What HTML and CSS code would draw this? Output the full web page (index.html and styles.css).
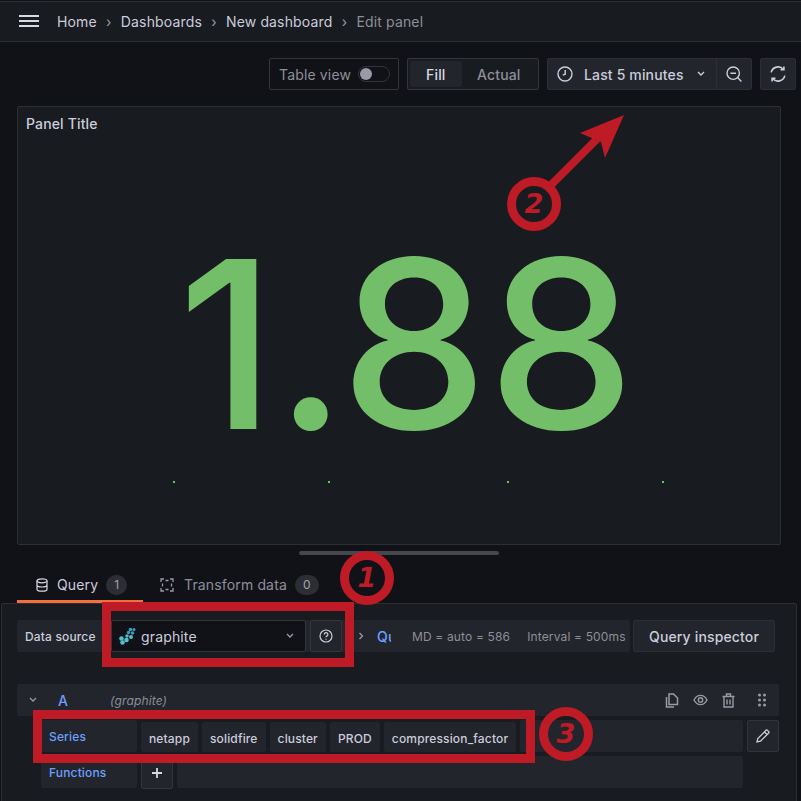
FILE: index.html
```html
<!DOCTYPE html>
<html lang="en">
<head>
    <meta charset="UTF-8">
    <title>Edit panel</title>
    <link rel="stylesheet" href="styles.css">
</head>
<body>

<header class="topbar">
    <svg class="burger" width="20" height="12" viewBox="0 0 20 12"><path d="M0 1h20M0 6h20M0 11h20" stroke="#d8d8e4" stroke-width="2"/></svg>
    <nav class="crumbs">
        <span>Home</span><i class="sep">›</i>
        <span>Dashboards</span><i class="sep">›</i>
        <span>New dashboard</span><i class="sep">›</i>
        <span class="current">Edit panel</span>
    </nav>
</header>

<div class="toolbar">
    <div class="table-toggle">
        <span>Table view</span>
        <span class="switch"><span class="knob"></span></span>
    </div>
    <div class="radio">
        <span class="radio-item active">Fill</span>
        <span class="radio-item">Actual</span>
    </div>
    <div class="time-group">
        <div class="time-picker">
            <svg width="16" height="16" viewBox="0 0 16 16" fill="none" stroke="#ccccdc" stroke-width="1.4"><circle cx="8" cy="8" r="7"/><path d="M8.2 4v4.2L5.8 9.2"/></svg>
            <span class="time-label">Last 5 minutes</span>
            <svg width="10" height="6" viewBox="0 0 10 6" fill="none" stroke="#ccccdc" stroke-width="1.4"><path d="M2 1l3 3 3-3"/></svg>
        </div>
        <div class="zoom-btn">
            <svg width="16" height="16" viewBox="0 0 16 16" fill="none" stroke="#ccccdc" stroke-width="1.4"><circle cx="7.2" cy="7.2" r="6.2"/><path d="M4.4 7.2h5.6M11.8 11.8L15.4 15.4"/></svg>
        </div>
    </div>
    <div class="refresh-btn">
        <svg width="16" height="16" viewBox="0 0 16 16" fill="none" stroke="#ccccdc" stroke-width="1.6"><path d="M1.2 6.4A7 7 0 0 1 13.4 3.4M14.8 9.6A7 7 0 0 1 2.6 12.6"/><path d="M13.9 0.4v3.4h-3.4M2.1 15.6v-3.4h3.4"/></svg>
    </div>
</div>

<section class="panel">
    <div class="panel-title">Panel Title</div>
    <div class="big-value">1.88</div>
    <span class="spark s1"></span>
    <span class="spark s2"></span>
    <span class="spark s3"></span>
    <span class="spark s4"></span>
</section>

<div class="splitter"><span class="handle"></span></div>

<div class="tabs">
    <div class="tab active">
        <svg width="14" height="14" viewBox="0 0 14 14" fill="none" stroke="#d8d8e4" stroke-width="1.2"><ellipse cx="7" cy="2.8" rx="5" ry="2"/><path d="M2 2.8v8.4c0 1.1 2.2 2 5 2s5-.9 5-2V2.8M2 7c0 1.1 2.2 2 5 2s5-.9 5-2"/></svg>
        <span>Query</span>
        <span class="count">1</span>
    </div>
    <div class="tab">
        <svg width="14" height="14" viewBox="0 0 14 14" fill="none" stroke="#9a9aa6" stroke-width="1.3"><path d="M1 4V1h3M10 1h3v3M13 10v3h-3M4 13H1v-3M5.500 2.500h3M11.500 5.500v3M5.500 11.500h3M2.500 5.500v3"/></svg>
        <span>Transform data</span>
        <span class="count">0</span>
    </div>
</div>

<section class="query-pane">
    <div class="ds-row">
        <div class="ds-bar">
            <span class="ds-label">Data source</span>
            <div class="ds-select">
                <svg width="18" height="18" viewBox="0 0 18 18" fill="#4fc0cc"><circle cx="12.500" cy="2.500" r="1.800" fill="#3a9bc4"/><circle cx="16" cy="2.500" r="1.500" fill="#3a9bc4"/><circle cx="10.500" cy="5.500" r="1.700" fill="#3a9bc4"/><circle cx="14.500" cy="6" r="1.700" fill="#3a9bc4"/><circle cx="9" cy="9" r="1.700"/><circle cx="13" cy="10" r="2"/><circle cx="8.500" cy="13" r="2.300"/><circle cx="3.500" cy="11.500" r="2.300"/><circle cx="4.500" cy="15.500" r="2.300"/></svg>
                <span class="ds-name">graphite</span>
                <svg width="10" height="6" viewBox="0 0 10 6" fill="none" stroke="#9a9aa6" stroke-width="1.3"><path d="M2 1l3 3 3-3"/></svg>
            </div>
            <div class="ds-help">
                <svg width="14" height="14" viewBox="0 0 14 14" fill="none" stroke="#ccccdc" stroke-width="1.2"><circle cx="7" cy="7" r="6"/><path d="M5.300 5.500a1.800 1.800 0 1 1 2.500 1.600c-.6.300-.8.600-.8 1.200"/><path d="M7 9.800v1"/></svg>
            </div>
            <svg class="ds-chevron" width="6" height="10" viewBox="0 0 6 10" fill="none" stroke="#9a9aa6" stroke-width="1.3"><path d="M1.500 2l3 3-3 3"/></svg>
            <span class="ds-options">Qu</span>
            <span class="ds-meta md">MD = auto = 586</span>
            <span class="ds-meta">Interval = 500ms</span>
        </div>
        <div class="inspector">Query inspector</div>
    </div>

    <div class="query-row">
        <div class="query-head">
            <svg class="collapse" width="10" height="6" viewBox="0 0 10 6" fill="none" stroke="#9a9aa6" stroke-width="1.3"><path d="M2 1l3 3 3-3"/></svg>
            <span class="ref-id">A</span>
            <span class="ds-ref">(graphite)</span>
            <div class="head-actions">
                <svg width="14" height="15" viewBox="0 0 14 15" fill="none" stroke="#9a9aa6" stroke-width="1.500"><path d="M4 1h4.500L12.500 5v6.500H4z"/><path d="M1.500 4v10H9"/></svg>
                <svg width="15" height="12" viewBox="0 0 15 12" fill="none" stroke="#9a9aa6" stroke-width="1.400"><path d="M1 6c1.500-3 3.800-4.600 6.500-4.600S12.500 3 14 6c-1.500 3-3.800 4.600-6.500 4.600S2.500 9 1 6z"/><circle cx="7.500" cy="6" r="2.200"/></svg>
                <svg width="13" height="15" viewBox="0 0 13 15" fill="none" stroke="#9a9aa6" stroke-width="1.400"><path d="M0.500 3.500h12M4.500 3V1h4v2M2 3.500V14h9V3.500M5 6.500v5M8 6.500v5"/></svg>
                <svg class="grip" width="8" height="14" viewBox="0 0 8 14" fill="#9a9aa6"><circle cx="1.500" cy="2" r="1.500"/><circle cx="6.500" cy="2" r="1.500"/><circle cx="1.500" cy="7" r="1.500"/><circle cx="6.500" cy="7" r="1.500"/><circle cx="1.500" cy="12" r="1.500"/><circle cx="6.500" cy="12" r="1.500"/></svg>
            </div>
        </div>

        <div class="editor">
            <div class="editor-row">
                <span class="field-label series">Series</span>
                <div class="segments">
                    <span class="segment">netapp</span>
                    <span class="segment">solidfire</span>
                    <span class="segment">cluster</span>
                    <span class="segment">PROD</span>
                    <span class="segment">compression_factor</span>
                    <span class="filler"></span>
                </div>
                <div class="pencil">
                    <svg width="14" height="14" viewBox="0 0 14 14" fill="none" stroke="#ccccdc" stroke-width="1.300"><path d="M1 13l.8-3.500L10 1.300a1 1 0 0 1 1.400 0l1.300 1.300a1 1 0 0 1 0 1.400L4.500 12.200zM8.500 3l2.500 2.500"/></svg>
                </div>
            </div>
            <div class="editor-row">
                <span class="field-label">Functions</span>
                <div class="segments">
                    <span class="plus"><svg width="10" height="10" viewBox="0 0 10 10" stroke="#d8d8e4" stroke-width="1.800"><path d="M5 0v10M0 5h10"/></svg></span>
                    <span class="filler"></span>
                </div>
            </div>
        </div>
    </div>
</section>

<!-- red annotations drawn on top of the screenshot -->
<span class="mark-box box-one"></span>
<span class="mark-box box-three"></span>

<svg class="arrow" width="801" height="801" viewBox="0 0 801 801">
    <path d="M548 188L600 136" stroke="#be1b26" stroke-width="8"/>
    <path d="M624 115L580 133L601 142L605 158z" fill="#be1b26"/>
</svg>

<span class="mark-num num-one">1</span>
<span class="mark-num num-two">2</span>
<span class="mark-num num-three">3</span>

</body>
</html>
```

FILE: styles.css
```css
* {
    box-sizing: border-box;
}
html, body {
    height: 801px;
    overflow: hidden;
}
body {
    margin: 0;
    background-color: #111217;
    color: #ccccdc;
    font-family: Inter, "Noto Sans", sans-serif;
    font-size: 14px;
    letter-spacing: 0.15px;
    position: relative;
}

.topbar {
    height: 41px;
    margin-top: 1px;
    border-top: 1px solid #2c2e33;
    border-bottom: 1px solid #2c2e33;
    background: #181b1f;
    display: flex;
    align-items: center;
    padding: 0 0 1px 19px;
}
.burger {
    margin-right: 18px;
}
.crumbs {
    display: flex;
    align-items: center;
    color: #ccccdc;
}
.crumbs .sep {
    font-style: normal;
    color: #9a9aa6;
    width: 24px;
    text-align: center;
}
.crumbs .current {
    color: #8e8e99;
}

.toolbar {
    height: 64px;
    padding: 16px 5px 0 0;
    display: flex;
    justify-content: flex-end;
    align-items: flex-start;
}
.table-toggle {
    width: 130px;
    height: 32px;
    border: 1px solid #33353a;
    border-radius: 2px;
    display: flex;
    align-items: center;
    justify-content: space-between;
    padding: 0 8px 0 9px;
    color: #8e8e99;
    margin-right: 8px;
}
.switch {
    width: 32px;
    height: 16px;
    border: 1px solid #33353a;
    border-radius: 8px;
    background: #111217;
    display: block;
    padding: 1px;
}
.knob {
    display: block;
    width: 12px;
    height: 12px;
    border-radius: 50%;
    background: #9a9aa6;
}
.radio {
    width: 132px;
    height: 32px;
    border: 1px solid #33353a;
    border-radius: 2px;
    background: #181b1f;
    padding: 2px;
    display: flex;
    margin-right: 8px;
}
.radio-item {
    display: flex;
    align-items: center;
    justify-content: center;
    width: 75px;
    color: #8e8e99;
    font-weight: 500;
}
.radio-item.active {
    width: 52px;
    background: #22252b;
    color: #d8d8e4;
    border-radius: 2px;
}
.time-group {
    display: flex;
    height: 32px;
    margin-right: 8px;
    background: #22252b;
    border: 1px solid #2c2e33;
    border-radius: 2px;
}
.time-picker {
    width: 169px;
    display: flex;
    align-items: center;
    padding-left: 9px;
    border-right: 1px solid #2c2e33;
}
.time-label {
    margin: 0 13px 0 11px;
    font-weight: 500;
    width: 99px;
    white-space: nowrap;
}
.zoom-btn, .refresh-btn {
    display: flex;
    align-items: center;
    justify-content: center;
}
.zoom-btn {
    width: 34px;
}
.refresh-btn {
    width: 36px;
    height: 32px;
    background: #22252b;
    border: 1px solid #2c2e33;
    border-radius: 2px;
}

.panel {
    position: relative;
    height: 439px;
    margin: 0 20px 0 17px;
    background: #181b1f;
    border: 1px solid #2c2e33;
    border-radius: 2px;
}
.panel-title {
    padding: 8px 8px 0;
    font-weight: 500;
    line-height: 17px;
}
.big-value {
    padding-left: 15px;
    text-align: center;
    color: #73bf69;
    font-size: 234px;
    font-weight: 500;
    letter-spacing: normal;
    line-height: 190px;
    margin-top: 117px;
    white-space: nowrap;
}
.spark {
    position: absolute;
    top: 374px;
    width: 2px;
    height: 2px;
    background: #73bf69;
}
.s1 { left: 155px; }
.s2 { left: 310px; }
.s3 { left: 489px; }
.s4 { left: 644px; }

.splitter {
    height: 14px;
    padding-top: 6px;
    display: flex;
    justify-content: center;
}
.handle {
    width: 200px;
    height: 4px;
    margin-left: -4px;
    border-radius: 2px;
    background: #46474c;
}

.tabs {
    height: 45px;
    margin-top: -1px;
    padding: 1px 0 0 17px;
    display: flex;
    gap: 3px;
}
.tab {
    height: 44px;
    padding: 10px 0 0 18px;
    display: flex;
    align-items: center;
    color: #8e8e99;
    width: 126px;
}
.tab.active {
    color: #ccccdc;
    border-bottom: 3px solid #f2703b;
}
.tab + .tab {
    width: auto;
    padding-left: 14px;
    padding-bottom: 3px;
}
.tab svg {
    margin-right: 10px;
}
.tab.active svg {
    margin-right: 8px;
}
.count {
    margin-left: 8px;
    width: 21px;
    height: 20px;
    line-height: 20px;
    border-radius: 10px;
    background: #2c2e33;
    color: #a5a5b0;
    text-align: center;
    font-size: 12px;
}
.tab + .tab .count {
    width: 24px;
}

.query-pane {
    height: 210px;
    margin: 0 4px 0 1px;
    padding: 16px 16px 0 15px;
    background: #181b1f;
    border: 1px solid #2c2e33;
    border-radius: 2px;
}
.ds-row {
    display: flex;
    gap: 3px;
    height: 32px;
}
.ds-bar {
    width: 613px;
    height: 32px;
    background: #22252b;
    border-radius: 2px;
    display: flex;
    align-items: center;
    overflow: hidden;
}
.ds-label {
    width: 94px;
    padding-left: 8px;
    font-size: 12px;
    font-weight: 500;
}
.ds-select {
    width: 195px;
    height: 32px;
    background: #111217;
    border: 1px solid #33353a;
    border-radius: 2px;
    display: flex;
    align-items: center;
    padding-left: 6px;
}
.ds-name {
    margin-left: 5px;
    width: 144px;
}
.ds-help {
    width: 32px;
    height: 32px;
    margin-left: 4px;
    background: #22252b;
    border: 1px solid #33353a;
    border-radius: 2px;
    display: flex;
    align-items: center;
    justify-content: center;
}
.ds-chevron {
    margin-left: 16px;
}
.ds-options {
    margin-left: 13px;
    width: 14px;
    overflow: hidden;
    color: #6e9fff;
    font-weight: 500;
}
.ds-meta {
    font-size: 12px;
    color: #8e8e99;
    white-space: nowrap;
}
.ds-meta.md {
    margin-left: 21px;
    margin-right: 17px;
}
.inspector {
    width: 142px;
    height: 32px;
    display: flex;
    align-items: center;
    justify-content: center;
    background: #22252b;
    border: 1px solid #2c2e33;
    border-radius: 2px;
    font-weight: 500;
}

.query-row {
    margin-top: 32px;
    width: 762px;
}
.query-head {
    height: 32px;
    background: #22252b;
    border-radius: 2px;
    display: flex;
    align-items: center;
    padding-left: 11px;
}
.ref-id {
    margin-left: 20px;
    width: 52px;
    color: #6e9fff;
    font-weight: 500;
}
.ds-ref {
    font-size: 12px;
    font-style: italic;
    color: #8e8e99;
}
.head-actions {
    margin-left: auto;
    display: flex;
    align-items: center;
    gap: 14px;
    padding-right: 13px;
}
.grip {
    margin-left: 9px;
}
.editor {
    margin-top: 4px;
    padding-left: 24px;
}
.editor-row {
    display: flex;
    gap: 4px;
    height: 32px;
    margin-bottom: 4px;
}
.field-label {
    width: 96px;
    height: 32px;
    padding-left: 8px;
    background: #22252b;
    border-radius: 2px;
    color: #6e9fff;
    font-size: 12px;
    font-weight: 500;
    line-height: 34px;
}
.field-label.series {
    line-height: 33px;
}
.segments {
    width: 602px;
    display: flex;
    gap: 4px;
}
.segment {
    height: 30px;
    margin-top: 2px;
    padding: 2px 8px 0;
    display: flex;
    align-items: center;
    background: #22252b;
    border-radius: 2px;
    font-size: 12px;
    font-weight: 500;
    white-space: nowrap;
}
.filler {
    flex: 1;
    background: #22252b;
    border-radius: 2px;
}
.plus, .pencil {
    width: 32px;
    height: 33px;
    display: flex;
    align-items: center;
    justify-content: center;
    background: #22252b;
    border: 1px solid #33353a;
    border-radius: 2px;
}
.pencil {
    height: 32px;
}

/* annotations */
.mark-box {
    position: absolute;
    border: 9px solid #be1b26;
}
.box-one {
    left: 102px;
    top: 602px;
    width: 252px;
    height: 65px;
}
.box-three {
    left: 33px;
    top: 710px;
    width: 502px;
    height: 53px;
}
.arrow {
    position: absolute;
    left: 0;
    top: 0;
}
.mark-num {
    position: absolute;
    width: 54px;
    height: 54px;
    border: 9px solid #be1b26;
    border-radius: 50%;
    color: #be1b26;
    font-family: "DejaVu Sans", sans-serif;
    font-size: 27px;
    font-weight: bold;
    font-style: italic;
    line-height: 36px;
    text-align: center;
}
.num-one { left: 340px; top: 551px; }
.num-two { left: 507px; top: 177px; }
.num-three { left: 539px; top: 707px; }
```
